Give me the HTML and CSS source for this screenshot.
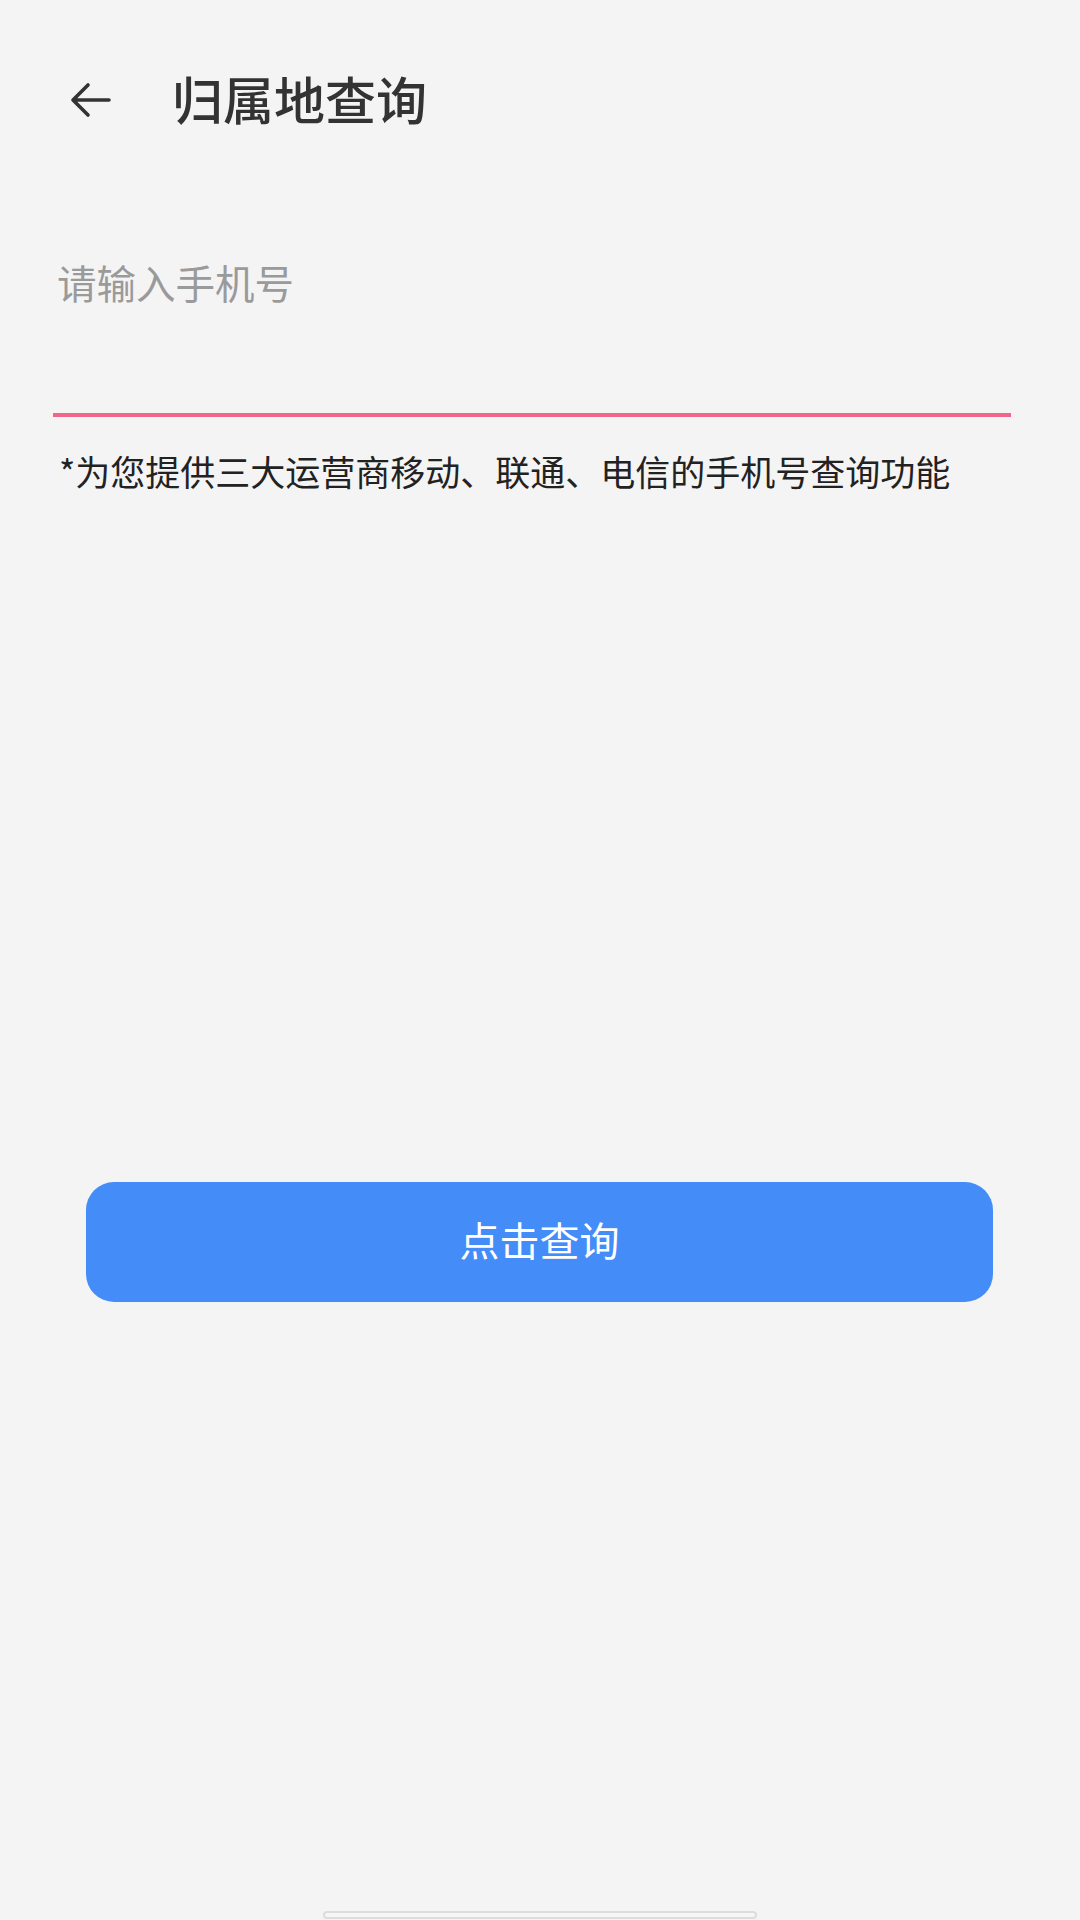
FILE: index.html
```html
<!DOCTYPE html>
<html lang="zh-CN">
<head>
    <meta charset="UTF-8">
    <meta name="viewport" content="width=device-width, initial-scale=1.0">
    <title>归属地查询</title>
    <link rel="stylesheet" href="styles.css">
</head>
<body>
    <div class="page">
        <header class="top-bar">
            <button class="back-btn" aria-label="返回">
                <svg width="42" height="36" viewBox="0 0 42 36">
                    <path d="M40 18 H4 M19 3 L4 18 L19 33" fill="none" stroke="#333" stroke-width="3.6" stroke-linecap="round" stroke-linejoin="round"/>
                </svg>
            </button>
            <h1>归属地查询</h1>
        </header>

        <input type="tel" class="phone-input" placeholder="请输入手机号">

        <p class="note">*为您提供三大运营商移动、联通、电信的手机号查询功能</p>

        <button class="query-btn">点击查询</button>

        <div class="home-bar"></div>
    </div>
</body>
</html>
```

FILE: styles.css
```css
body {
    margin: 0;
    padding: 0;
    background-color: #f4f4f5;
    font-family: "Noto Sans CJK SC", "Noto Sans", sans-serif;
    color: #222;
}

.page {
    display: flex;
    flex-direction: column;
    height: 1920px;
}

.top-bar {
    display: flex;
    align-items: center;
    height: 84px;
    margin-top: 56px;
    padding-left: 69px;
}

.back-btn {
    display: flex;
    padding: 0;
    margin-top: 4px;
    border: none;
    background: none;
}

.top-bar h1 {
    margin: 0 0 0 61px;
    font-size: 51px;
    font-weight: 500;
    color: #333;
    line-height: 1;
}

.phone-input {
    display: block;
    box-sizing: border-box;
    height: 167px;
    margin: 110px 69px 0 53px;
    padding: 0 0 100px 4px;
    border: none;
    border-bottom: 4px solid #f0668b;
    background: transparent;
    font-family: inherit;
    font-size: 39.5px;
    color: #222;
    outline: none;
}

.phone-input::placeholder {
    color: #9a9a9a;
}

.note {
    margin: 32px 0 0 59px;
    font-size: 35px;
    line-height: 44px;
    color: #222;
}

.query-btn {
    display: block;
    width: 907px;
    height: 120px;
    margin: 689px 0 0 86px;
    padding: 0 0 6px;
    border: none;
    border-radius: 28px;
    background-color: #448cf8;
    color: #fff;
    font-family: inherit;
    font-size: 40px;
}

.home-bar {
    box-sizing: border-box;
    width: 434px;
    height: 8px;
    margin: auto 0 1px 323px;
    border: 2px solid #dcdcdc;
    border-radius: 4px;
    background-color: #f6f6f6;
}
```
